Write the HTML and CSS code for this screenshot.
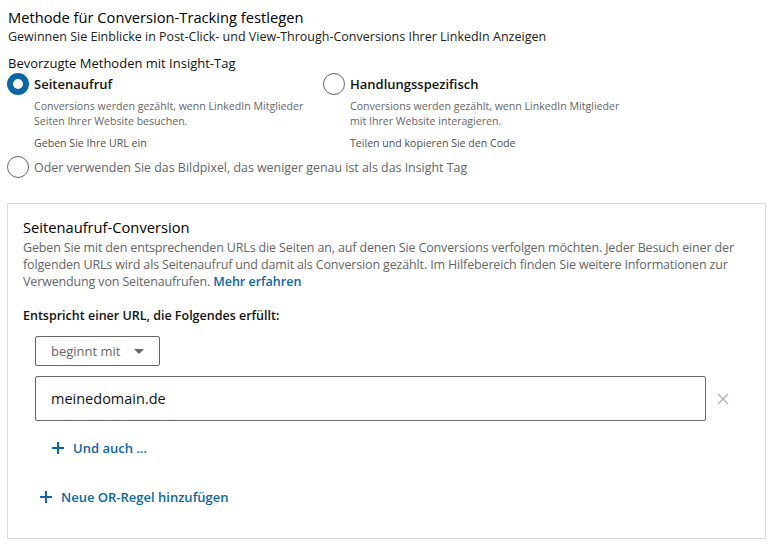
FILE: index.html
```html
<!DOCTYPE html>
<html lang="de">
<head>
<meta charset="utf-8">
<link rel="stylesheet" href="styles.css">
</head>
<body>
<div class="page">
  <h1 class="title">Methode für Conversion-Tracking festlegen</h1>
  <p class="subtitle">Gewinnen Sie Einblicke in Post-Click- und View-Through-Conversions Ihrer LinkedIn Anzeigen</p>
  <h2 class="group-label">Bevorzugte Methoden mit Insight-Tag</h2>
  <div class="methods">
    <div class="method method-left">
      <div class="radio-row">
        <span class="radio radio-on"></span>
        <span class="method-name">Seitenaufruf</span>
      </div>
      <p class="method-desc">Conversions werden gezählt, wenn LinkedIn Mitglieder<br>Seiten Ihrer Website besuchen.</p>
      <p class="method-hint">Geben Sie Ihre URL ein</p>
    </div>
    <div class="method method-right">
      <div class="radio-row">
        <span class="radio"></span>
        <span class="method-name">Handlungsspezifisch</span>
      </div>
      <p class="method-desc">Conversions werden gezählt, wenn LinkedIn Mitglieder<br>mit Ihrer Website interagieren.</p>
      <p class="method-hint">Teilen und kopieren Sie den Code</p>
    </div>
  </div>
  <div class="radio-row pixel-row">
    <span class="radio"></span>
    <span class="pixel-text">Oder verwenden Sie das Bildpixel, das weniger genau ist als das Insight Tag</span>
  </div>

  <section class="card">
    <h3 class="card-title">Seitenaufruf-Conversion</h3>
    <p class="card-text">Geben Sie mit den entsprechenden URLs die Seiten an, auf denen Sie Conversions verfolgen möchten. Jeder Besuch einer der folgenden URLs wird als Seitenaufruf und damit als Conversion gezählt. Im Hilfebereich finden Sie weitere Informationen zur Verwendung von Seitenaufrufen. <a class="link" href="#">Mehr erfahren</a></p>
    <p class="match-label">Entspricht einer URL, die Folgendes erfüllt:</p>
    <div class="rule">
      <button class="select" type="button">beginnt mit <span class="caret"></span></button>
      <div class="input-row">
        <div class="url-input">meinedomain.de</div>
        <span class="remove" aria-label="Entfernen">
          <svg width="12" height="12" viewBox="0 0 12 12"><path d="M1 1 L11 11 M11 1 L1 11" stroke="#b3b3b3" stroke-width="1.4" fill="none"/></svg>
        </span>
      </div>
      <a class="add add-and" href="#"><svg class="plus" width="12" height="12" viewBox="0 0 12 12"><path d="M6 0 V12 M0 6 H12" stroke="#0a66a8" stroke-width="2" fill="none"/></svg>Und auch ...</a>
    </div>
    <a class="add add-or" href="#"><svg class="plus" width="12" height="12" viewBox="0 0 12 12"><path d="M6 0 V12 M0 6 H12" stroke="#0a66a8" stroke-width="2" fill="none"/></svg>Neue OR-Regel hinzufügen</a>
  </section>
</div>
</body>
</html>
```

FILE: styles.css
```css
* { box-sizing: border-box; }
html, body { margin: 0; padding: 0; background: #fff; }
body {
  font-family: "Open Sans", "Noto Sans", "Liberation Sans", sans-serif;
  color: #1b1b1b;
}
.page { padding: 7px 9px 0 7px; }
.title {
  margin: 0 0 0 1px;
  font-size: 14.7px;
  font-weight: 400;
  line-height: 21px;
  color: #000;
}
.subtitle {
  margin: 0 0 0 1px;
  font-size: 12.5px;
  line-height: 18px;
  color: #222;
}
.group-label {
  margin: 8px 0 0 1px;
  font-size: 13px;
  font-weight: 400;
  line-height: 18px;
  color: #111;
}
.methods { display: flex; margin-top: 1px; }
.method-left { width: 316px; }
.radio-row { display: flex; align-items: center; gap: 5px; }
.radio {
  width: 22px; height: 22px;
  border-radius: 50%;
  border: 1px solid #666;
  flex: none;
  background: #fff;
}
.radio-on { border: 6px solid #0a66a8; }
.method-name {
  font-size: 13px;
  font-weight: 600;
  color: #111;
}
.method-desc {
  margin: 4px 0 0 27px;
  font-size: 10.6px;
  line-height: 15px;
  color: #666;
}
.method-hint {
  margin: 7px 0 0 27px;
  font-size: 10.6px;
  line-height: 15px;
  font-weight: 500;
  color: #505050;
}
.pixel-row { margin-top: 5px; }
.pixel-text { font-size: 12.4px; color: #666; }
.card {
  margin-top: 25px;
  border: 1px solid #dcdcdc;
  padding: 13px 12px 32px 15px;
}
.card-title {
  margin: 0;
  font-size: 14.7px;
  font-weight: 400;
  line-height: 20px;
  color: #000;
}
.card-text {
  margin: 2px 0 0 0;
  font-size: 12.5px;
  line-height: 17px;
  letter-spacing: -0.15px;
  color: #666;
}
.link { color: #0a66a8; font-weight: 600; text-decoration: none; letter-spacing: 0; }
.match-label {
  margin: 17px 0 0 0;
  font-size: 12.5px;
  font-weight: 600;
  line-height: 18px;
  color: #111;
}
.rule { padding: 11px 0 0 12px; }
.select {
  display: flex; align-items: center; gap: 13px;
  height: 30px;
  padding: 0 15px 0 15px;
  border: 1px solid #666;
  border-radius: 2px;
  background: #fff;
  font-family: inherit;
  font-size: 13px;
  color: #666;
}
.caret {
  width: 0; height: 0;
  border-left: 5px solid transparent;
  border-right: 5px solid transparent;
  border-top: 5px solid #666;
}
.input-row { display: flex; align-items: center; gap: 11px; margin-top: 10px; }
.url-input {
  width: 671px;
  height: 45px;
  border: 1px solid #666;
  border-radius: 2px;
  padding: 0 15px;
  display: flex; align-items: center;
  font-size: 14.5px;
  color: #111;
}
.remove { display: flex; }
.add {
  display: flex; align-items: center; gap: 9px;
  color: #0a66a8;
  font-size: 13px;
  font-weight: 600;
  text-decoration: none;
}
.add-and { margin: 18px 0 0 17px; }
.add-or { margin: 31px 0 0 17px; }
.plus { flex: none; }
```
